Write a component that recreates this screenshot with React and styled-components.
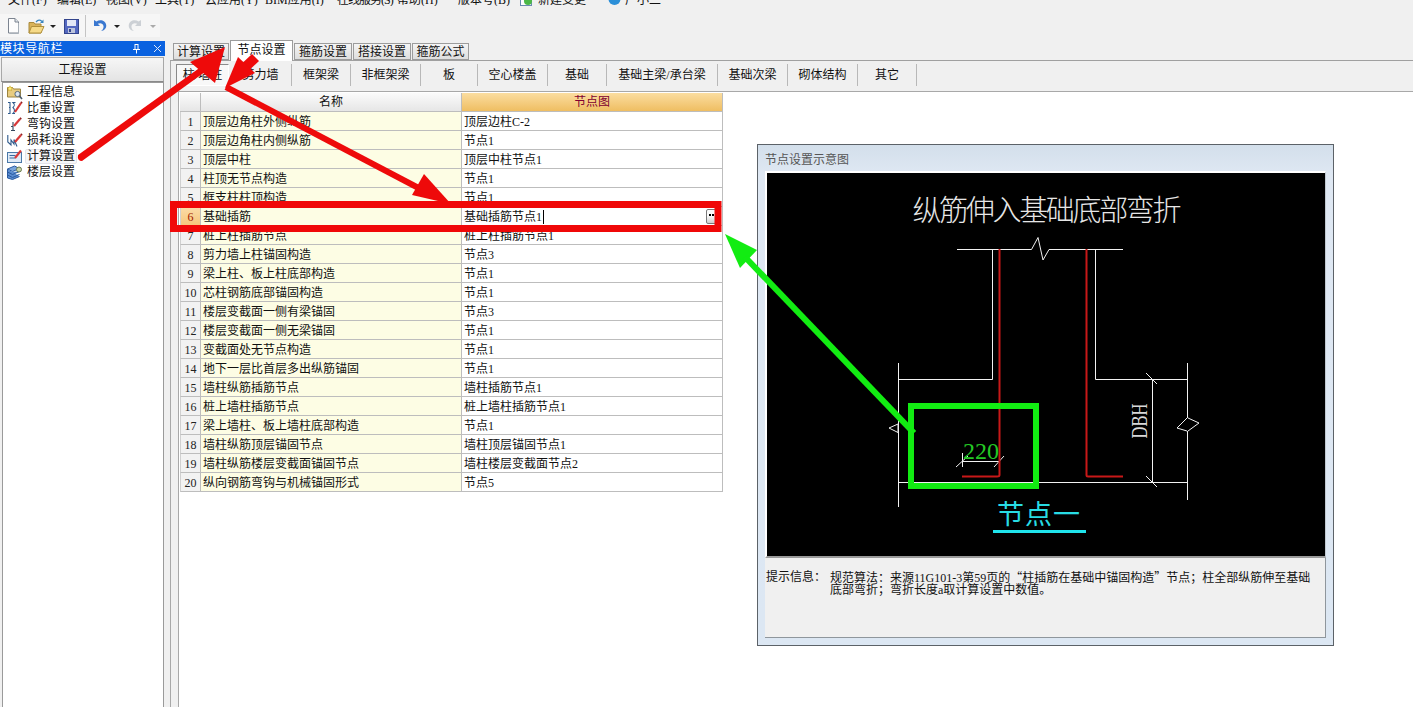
import React from "react";
import styled, { createGlobalStyle } from "styled-components";

const UI_FONT = `"Liberation Serif", "Noto Sans CJK SC", sans-serif`;

const Global = createGlobalStyle`
  html, body { margin: 0; padding: 0; background: #f0f0f0; }
  body { font: 12px/14px ${UI_FONT}; color: #111; overflow: hidden; }
  * { box-sizing: border-box; }
`;

const Page = styled.div`
  position: relative;
  width: 1413px;
  height: 707px;
  overflow: hidden;
  display: flex;
  flex-direction: column;
  background: #f0f0f0;
`;

/* Menu bar, scrolled almost out of the window */
const MenuBar = styled.div`
  height: 6px;
  margin-bottom: 8px;
  padding-left: 8px;
  display: flex;
  align-items: flex-end;
  overflow: hidden;
  flex: none;
`;
const MenuItem = styled.span`
  flex: none;
  width: ${(p) => p.$w}px;
  display: flex;
  align-items: center;
  gap: 4px;
  line-height: 12px;
  white-space: nowrap;
  letter-spacing: ${(p) => (p.$tight ? "-1px" : "normal")};
`;

const Toolbar = styled.div`
  height: 27px;
  flex: none;
  display: flex;
  align-items: flex-start;
`;
const ToolStrip = styled.div`
  width: 160px;
  height: 23px;
  padding: 1px 0 0 7px;
  background: #f6f6f6;
  display: flex;
  align-items: center;
`;
const ToolIcon = styled.span`
  flex: none;
  display: flex;
  width: ${(p) => p.$w}px;
  opacity: ${(p) => (p.$off ? 0.45 : 1)};
`;
const ToolSep = styled.span`
  flex: none;
  width: 1px;
  height: 22px;
  margin: 0 7px 0 6px;
  background: #c4c4c4;
`;
const Caret = styled.span`
  flex: none;
  width: 0;
  height: 0;
  margin: 0 ${(p) => p.$r ?? 6}px 0 ${(p) => p.$l ?? 5}px;
  border-left: 3px solid transparent;
  border-right: 3px solid transparent;
  border-top: 3px solid ${(p) => (p.$off ? "#aaa" : "#222")};
`;

const Main = styled.div`
  flex: 1;
  display: flex;
  min-height: 0;
`;

/* Left navigation dock */
const Dock = styled.aside`
  width: 165px;
  flex: none;
  display: flex;
  flex-direction: column;
`;
const DockTitle = styled.div`
  height: 15px;
  flex: none;
  padding: 0 3px 0 0;
  background: #0a62e0;
  color: #fff;
  display: flex;
  align-items: center;
  justify-content: space-between;
  font-size: 12px;
  letter-spacing: 0.6px;
`;
const DockGlyphs = styled.span`
  display: flex;
  gap: 12px;
  align-items: center;
`;
const DockButton = styled.div`
  height: 25px;
  flex: none;
  margin: 1px 1px 0;
  border: 1px solid #a8a8a8;
  border-bottom-color: #8a8a8a;
  background: linear-gradient(#f6f6f6, #e4e4e4);
  display: flex;
  align-items: center;
  justify-content: center;
`;
const Tree = styled.ul`
  flex: 1;
  list-style: none;
  margin: 0 1px 0 2px;
  padding: 1px 0 0 4px;
  background: #fff;
  border: 1px solid #9a9a9a;
  border-bottom: none;
`;
const TreeRow = styled.li`
  height: 16px;
  display: flex;
  align-items: center;
  gap: 4px;
`;
const TreeLabel = styled.span`
  padding: 0 1px;
  height: 15px;
  line-height: 15px;
  border-radius: 2px;
  border: 1px solid ${(p) => (p.$current ? "#e4e4ea" : "transparent")};
  background: ${(p) => (p.$current ? "#f6f6f8" : "transparent")};
  margin-left: -2px;
  display: flex;
  align-items: center;
`;

/* Settings workspace */
const Workspace = styled.section`
  flex: 1;
  min-width: 0;
  display: flex;
  flex-direction: column;
  margin-left: 5px;
  border-left: 1px solid #a8a8a8;
`;
const TabRow = styled.div`
  height: 20px;
  flex: none;
  margin-left: -1px;
  padding-left: 3px;
  display: flex;
  gap: 1px;
  align-items: flex-end;
  background: #f0f0f0;
  border-bottom: 1px solid #a0a0a0;
`;
const Tab = styled.div`
  width: ${(p) => p.$w}px;
  height: ${(p) => (p.$active ? 21 : 17)}px;
  margin-bottom: ${(p) => (p.$active ? -1 : 0)}px;
  padding-bottom: ${(p) => (p.$active ? 3 : 0)}px;
  position: relative;
  background: ${(p) => (p.$active ? "#fff" : "linear-gradient(#f4f4f4, #dedede)")};
  border: 1px solid #9c9c9c;
  border-bottom: ${(p) => (p.$active ? "none" : "1px solid #9c9c9c")};
  display: flex;
  align-items: center;
  justify-content: center;
`;
const SubBar = styled.div`
  height: 31px;
  flex: none;
  padding: 3px 0 0 5px;
  display: flex;
  align-items: flex-start;
  border-bottom: 1px solid #a8a8a8;
`;
const SubTab = styled.div`
  width: ${(p) => p.$w}px;
  height: 22px;
  flex: none;
  display: flex;
  align-items: center;
  justify-content: center;
  border-right: 1px solid #b8b8b8;
  ${(p) =>
    p.$pressed &&
    `
    border: 1px solid #fff;
    border-left-color: #8a8a8a;
    border-top-color: #8a8a8a;
    background: #f8f8f8;
    margin-right: 1px;
    width: ${p.$w - 1}px;
  `}
`;
const GridArea = styled.div`
  flex: 1;
  min-height: 0;
  margin-left: 7px;
  padding: 1px 0 0 1px;
  background: #fff;
  border-left: 1px solid #a8a8a8;
`;
const Grid = styled.div`
  width: 543px;
  display: grid;
  grid-template-columns: 21px 261px 261px;
  grid-auto-rows: 19px;
`;
const Cell = styled.div`
  display: flex;
  align-items: center;
  padding: 1px 0 0 2px;
  white-space: nowrap;
  border-right: 1px solid #bdbdbd;
  border-bottom: 1px solid #bdbdbd;
  background: #fff;
`;
const IndexCell = styled(Cell)`
  justify-content: center;
  padding: 1px 0 0;
  color: ${(p) => (p.$current ? "#a02000" : "#222")};
  background: ${(p) => (p.$current ? "linear-gradient(#fbdca8, #f6c77c)" : "#f2f2f2")};
  border-left: 1px solid #d0d0d0;
`;
const NameCell = styled(Cell)`
  background: #fdfde4;
`;
const ValueCell = styled(Cell)`
  justify-content: space-between;
  padding-right: 5px;
`;
const HeadCell = styled(Cell)`
  justify-content: center;
  padding: 0;
  background: linear-gradient(#fbfbfb, #e6e6e6);
`;
const HeadCellActive = styled(HeadCell)`
  color: #800030;
  background: linear-gradient(#fbdda0, #efbe62);
`;
const Caretted = styled.span`
  border-right: 1px solid #000;
  padding-right: 1px;
`;
const EllipsisButton = styled.span`
  width: 11px;
  height: 15px;
  border: 1px solid #7a7a7a;
  border-radius: 2px;
  background: linear-gradient(#fafafa 45%, #cfcfcf);
  display: flex;
  gap: 1px;
  justify-content: center;
  padding-top: 4px;
`;
const Dot = styled.i`
  width: 2px;
  height: 2px;
  background: #000;
`;

/* Floating preview window */
const PreviewWindow = styled.div`
  position: absolute;
  left: 757px;
  top: 144px;
  width: 577px;
  height: 502px;
  padding: 0 7px 7px;
  display: flex;
  flex-direction: column;
  background: linear-gradient(#d3dfeb, #dfe8f3 30px, #dce7f3);
  border: 1px solid #5c6268;
`;
const PreviewTitle = styled.div`
  height: 26px;
  flex: none;
  padding-top: 8px;
  line-height: 14px;
  color: #555;
`;
const Canvas = styled.div`
  height: 387px;
  flex: none;
  background: #000;
  border: solid #fff;
  border-width: 2px 0 0 2px;
  border-bottom: 2px solid #9a9a9a;
  border-right: 1px solid #c0c8d0;
  display: flex;
`;
const Hint = styled.div`
  flex: 1;
  padding: 13px 12px 0 0;
  background: #f0f0f0;
  border-bottom: 1px solid #8f969c;
  border-right: 1px solid #8f969c;
  display: flex;
  line-height: 12px;
  font-size: 12px;
`;
const HintLabel = styled.span`
  flex: none;
  width: 65px;
  padding-left: 1px;
`;
const HintBody = styled.span`
  flex: 1;
  min-width: 0;
`;
const WideQuote = styled.span`
  font-family: "Noto Sans CJK SC", sans-serif;
`;

const AnnotationLayer = styled.svg`
  position: absolute;
  left: 0;
  top: 0;
  width: 1413px;
  height: 707px;
  pointer-events: none;
`;

const NewIcon = () => (
  <svg width="13" height="16" viewBox="0 0 13 16">
    <path d="M1.500 .5h6.500l3.500 3.500v11h-10z" fill="#fdfdfd" stroke="#7c8490" />
    <path d="M8 .5v3.500h3.500" fill="#dfe4ea" stroke="#7c8490" />
    <path d="M11.500 5v10.500h-9" fill="none" stroke="#a8b0b8" />
  </svg>
);
const OpenIcon = () => (
  <svg width="17" height="15" viewBox="0 0 17 15">
    <path d="M1 3.500h5l1 1.500h6v9H1z" fill="#d9b35a" stroke="#a88a3c" />
    <path d="M3.500 7.500H16l-3 6.500H1z" fill="#f6da88" stroke="#b0903c" />
    <path d="M8 3c2-2.300 4-2.300 6-.5" fill="none" stroke="#3a86c0" strokeWidth="1.300" />
    <path d="M15.500 .5v3.500h-3.500z" fill="#3a86c0" />
  </svg>
);
const SaveIcon = () => (
  <svg width="15" height="15" viewBox="0 0 15 15">
    <rect x=".5" y=".5" width="14" height="14" fill="#5468c0" stroke="#33448c" />
    <rect x="3" y="1" width="9" height="6" fill="#e4e8f6" />
    <rect x="4" y="9" width="7" height="5" fill="#bcc4dc" />
    <rect x="5" y="10" width="2" height="3" fill="#33448c" />
  </svg>
);
const UndoIcon = () => (
  <svg width="14" height="14" viewBox="0 0 14 14">
    <path d="M1 1v6h6L4.800 4.800C7 3.400 10 4.200 10.500 7c.3 2-.8 3.800-2.500 5 3.400-.4 5.600-3 5.200-6C12.600 2 7.600-.4 3.400 2.600z" fill="#3a78d0" />
  </svg>
);
const RedoIcon = () => (
  <svg width="14" height="14" viewBox="0 0 14 14">
    <path d="M13 1v6H7l2.200-2.200C7 3.400 4 4.200 3.500 7c-.3 2 .8 3.800 2.500 5C2.600 11.600.4 9 .8 6 1.400 2 6.400-.4 10.600 2.600z" fill="#9aa4ae" />
  </svg>
);
const ChangeIcon = () => (
  <svg width="14" height="12" viewBox="0 0 14 12">
    <rect x=".5" y=".5" width="11" height="11" fill="#fff" stroke="#6a8ab0" />
    <circle cx="8" cy="7" r="4" fill="#4cb848" />
  </svg>
);
const HelperIcon = () => (
  <svg width="13" height="12" viewBox="0 0 13 12">
    <circle cx="6.500" cy="5" r="6" fill="#2b8fd8" />
  </svg>
);

const Pin = () => (
  <svg width="9" height="10" viewBox="0 0 9 10">
    <path d="M2.500 .5h4M3 1v4.500M6 1v4.500M1 5.500h7M4.500 5.500v4" stroke="#fff" fill="none" />
  </svg>
);
const Close = () => (
  <svg width="9" height="9" viewBox="0 0 9 9">
    <path d="M1 1l7 7M8 1L1 8" stroke="#dfe8f8" fill="none" />
  </svg>
);

const TreeIcons = {
  info: (
    <svg width="16" height="15" viewBox="0 0 16 15">
      <path d="M.5 2.500h5l1 1.500h7v8h-13z" fill="#e8cc80" stroke="#9c8440" />
      <path d="M3 .8l.8 1.600 1.800.2-1.300 1.200.3 1.800L3 4.900l-1.600.9.3-1.800L.4 2.600l1.800-.2z" fill="#fff27c" stroke="#c09a20" strokeWidth=".5" />
      <circle cx="10.500" cy="9" r="2.600" fill="#dbe6f0" stroke="#5a6a7a" />
      <path d="M12.500 11l2.500 3" stroke="#4a5a6a" strokeWidth="1.600" />
    </svg>
  ),
  weight: (
    <svg width="16" height="15" viewBox="0 0 16 15">
      <path d="M1 1.500h2v5H2h1v6H1M8.500 1.500H6c2 2 2 3 0 5 2 2 2 4 0 6h2" stroke="#2e5a8c" fill="none" strokeWidth="1.100" />
      <path d="M8 11l6-9" stroke="#d83a3a" strokeWidth="2.200" />
      <path d="M14 2l1-1" stroke="#902020" strokeWidth="2" />
    </svg>
  ),
  hook: (
    <svg width="16" height="15" viewBox="0 0 16 15">
      <path d="M6 5v8M4 13.500h4M4 9.500h2" stroke="#33475c" fill="none" strokeWidth="1.100" />
      <path d="M7 9l6-7" stroke="#d83a3a" strokeWidth="2.200" />
      <path d="M13 2l1.200-1" stroke="#902020" strokeWidth="2" />
    </svg>
  ),
  loss: (
    <svg width="16" height="15" viewBox="0 0 16 15">
      <path d="M.8 2v7l3.200 3V7l3 4V6.500l3 7" stroke="#2e5a8c" fill="none" strokeWidth="1.100" />
      <path d="M8 9l6-7" stroke="#d83a3a" strokeWidth="2.200" />
      <path d="M14 2l1-1" stroke="#902020" strokeWidth="2" />
    </svg>
  ),
  calc: (
    <svg width="16" height="15" viewBox="0 0 16 15">
      <rect x=".5" y="3.500" width="14" height="10" fill="#dfeaf6" stroke="#4a78a8" />
      <path d="M2.500 6.500h6M2.500 9h6" stroke="#3a6aa0" />
      <path d="M8 9l6-7.500" stroke="#d83a3a" strokeWidth="2.200" />
    </svg>
  ),
  floor: (
    <svg width="16" height="15" viewBox="0 0 16 15">
      <path d="M.5 4l7-3 5 2.500-7 3z" fill="#7aa6dc" stroke="#2a5aa0" />
      <path d="M.5 7l5 2.500 7-3M.5 10l5 2.500 7-3M.5 4v9l5 1.500 7-3" fill="#5a8cd0" stroke="#2a5aa0" />
      <circle cx="12" cy="4.500" r="2.500" fill="#c8d4a8" stroke="#6a7a50" />
    </svg>
  ),
};

const MENU = [
  ["文件(F)", 49], ["编辑(E)", 49], ["视图(V)", 49], ["工具(T)", 50], ["云应用(Y)", 60],
  ["BIM应用(I)", 72], ["在线服务(S)", 60, true], ["帮助(H)", 61], ["版本号(B)", 62],
];
const TREE = [
  ["info", "工程信息"], ["weight", "比重设置"], ["hook", "弯钩设置"],
  ["loss", "损耗设置"], ["calc", "计算设置"], ["floor", "楼层设置"],
];
const TABS = [["计算设置", 56], ["节点设置", 63], ["箍筋设置", 58], ["搭接设置", 58], ["箍筋公式", 57]];
const SUBTABS = [
  ["柱/墙柱", 54], ["剪力墙", 62], ["框架梁", 59], ["非框架梁", 70], ["板", 57], ["空心楼盖", 70],
  ["基础", 59], ["基础主梁/承台梁", 111], ["基础次梁", 70], ["砌体结构", 70], ["其它", 59],
];
const ROWS = [
  ["顶层边角柱外侧纵筋", "顶层边柱C-2"],
  ["顶层边角柱内侧纵筋", "节点1"],
  ["顶层中柱", "顶层中柱节点1"],
  ["柱顶无节点构造", "节点1"],
  ["框支柱柱顶构造", "节点1"],
  ["基础插筋", "基础插筋节点1"],
  ["桩上柱插筋节点", "桩上柱插筋节点1"],
  ["剪力墙上柱锚固构造", "节点3"],
  ["梁上柱、板上柱底部构造", "节点1"],
  ["芯柱钢筋底部锚固构造", "节点1"],
  ["楼层变截面一侧有梁锚固", "节点3"],
  ["楼层变截面一侧无梁锚固", "节点1"],
  ["变截面处无节点构造", "节点1"],
  ["地下一层比首层多出纵筋锚固", "节点1"],
  ["墙柱纵筋插筋节点", "墙柱插筋节点1"],
  ["桩上墙柱插筋节点", "桩上墙柱插筋节点1"],
  ["梁上墙柱、板上墙柱底部构造", "节点1"],
  ["墙柱纵筋顶层锚固节点", "墙柱顶层锚固节点1"],
  ["墙柱纵筋楼层变截面锚固节点", "墙柱楼层变截面节点2"],
  ["纵向钢筋弯钩与机械锚固形式", "节点5"],
];

/* Detail drawing of the footing anchorage, in window coordinates */
const NodeDrawing = () => (
  <svg width="556" height="384" viewBox="768 173 556 384" style={{ display: "block" }}>
    <text x="1048" y="221" textAnchor="middle" fontSize="29" fill="#e6e6e6" textLength="269" fontFamily={`"Noto Sans CJK SC", sans-serif`} fontWeight="300">
      纵筋伸入基础底部弯折
    </text>
    <g stroke="#f2f2f2" strokeWidth="1" fill="none">
      <path d="M958 249.500H1032.500L1039 237.500L1044 260L1050 249.500H1124" />
      <path d="M993.500 249V379.500H899.500M899.500 363V507M890 428L899 424V432.500Z" />
      <path d="M1096.500 249V379.500H1188.500M1188.500 363V418M1188.500 431V500" />
      <path d="M899 482.500H1188.500" />
      <path d="M1153.500 379V482M1147 373L1158 384M1147 476L1158 487" />
      <path d="M1188 418L1178 428L1188 431M1189 418L1200 423L1189 431" />
      <path d="M963.500 453V467M957 467L969 456M963 461.500H1001M995 467L1005 456" />
    </g>
    <path d="M1000.500 249V475Q1000.500 476.500 998 476.500H963" fill="none" stroke="#c81818" strokeWidth="2" />
    <path d="M1087.500 249V475Q1087.500 476.500 1089 476.500H1124" fill="none" stroke="#c81818" strokeWidth="2" />
    <text
      x="1149"
      y="422"
      textAnchor="middle"
      fontSize="23"
      fill="#d8d8d8"
      textLength="35"
      lengthAdjust="spacingAndGlyphs"
      transform="rotate(-90 1148 422)"
      fontFamily={`"Liberation Serif", serif`}
    >
      DBH
    </text>
    <text x="982" y="459" textAnchor="middle" fontSize="24" fill="#24c824" fontFamily={`"Liberation Serif", serif`}>
      220
    </text>
    <text x="1040" y="524" textAnchor="middle" fontSize="27" fill="#28dce4" letterSpacing="1" fontFamily={`"Noto Sans CJK SC", sans-serif`}>
      节点一
    </text>
    <rect x="994" y="530" width="93" height="3" fill="#1fe4ec" />
  </svg>
);

export default function App() {
  return (
    <Page>
      <Global />
      <MenuBar>
        {MENU.map(([label, w, tight]) => (
          <MenuItem key={label} $w={w} $tight={tight}>{label}</MenuItem>
        ))}
        <MenuItem $w={88}><ChangeIcon />新建变更</MenuItem>
        <MenuItem $w={60}><HelperIcon />广小二</MenuItem>
      </MenuBar>
      <Toolbar>
        <ToolStrip>
          <ToolIcon $w={21}><NewIcon /></ToolIcon>
          <ToolIcon $w={17}><OpenIcon /></ToolIcon>
          <Caret $l={5} $r={8} />
          <ToolIcon $w={15}><SaveIcon /></ToolIcon>
          <ToolSep />
          <ToolIcon $w={14}><UndoIcon /></ToolIcon>
          <Caret $l={7} $r={8} />
          <ToolIcon $w={14} $off><RedoIcon /></ToolIcon>
          <Caret $off $l={8} />
        </ToolStrip>
      </Toolbar>
      <Main>
        <Dock>
          <DockTitle>
            模块导航栏
            <DockGlyphs><Pin /><Close /></DockGlyphs>
          </DockTitle>
          <DockButton>工程设置</DockButton>
          <Tree>
            {TREE.map(([icon, label]) => (
              <TreeRow key={label}>
                {TreeIcons[icon]}
                <TreeLabel $current={label === "计算设置"}>{label}</TreeLabel>
              </TreeRow>
            ))}
          </Tree>
        </Dock>
        <Workspace>
          <TabRow>
            {TABS.map(([label, w]) => (
              <Tab key={label} $w={w} $active={label === "节点设置"}>{label}</Tab>
            ))}
          </TabRow>
          <SubBar>
            {SUBTABS.map(([label, w], i) => (
              <SubTab key={label} $w={w} $pressed={i === 0}>{label}</SubTab>
            ))}
          </SubBar>
          <GridArea>
            <Grid>
              <HeadCell />
              <HeadCell>名称</HeadCell>
              <HeadCellActive>节点图</HeadCellActive>
              {ROWS.map(([name, value], i) => (
                <React.Fragment key={name}>
                  <IndexCell $current={i === 5}>{i + 1}</IndexCell>
                  <NameCell>{name}</NameCell>
                  {i === 5 ? (
                    <ValueCell>
                      <Caretted>{value}</Caretted>
                      <EllipsisButton><Dot /><Dot /></EllipsisButton>
                    </ValueCell>
                  ) : (
                    <ValueCell>{value}</ValueCell>
                  )}
                </React.Fragment>
              ))}
            </Grid>
          </GridArea>
        </Workspace>
      </Main>

      <PreviewWindow>
        <PreviewTitle>节点设置示意图</PreviewTitle>
        <Canvas><NodeDrawing /></Canvas>
        <Hint>
          <HintLabel>提示信息：</HintLabel>
          <HintBody>
            规范算法：来源11G101-3第59页的<WideQuote>“</WideQuote>柱插筋在基础中锚固构造<WideQuote>”</WideQuote>节点；柱全部纵筋伸至基础底部弯折；弯折长度a取计算设置中数值。
          </HintBody>
        </Hint>
      </PreviewWindow>

      {/* Hand-drawn callouts over the window */}
      <AnnotationLayer viewBox="0 0 1413 707">
        <g fill="#ee0a0a">
          <path d="M78 155L205 64L209 69L82 161Q77 161 78 155Z" />
          <path d="M225 47L190 62L215 83Z" />
          <path d="M252 54L259 61L243 76L236 69Z" />
          <path d="M225 88L238 57L255 73Z" />
          <path d="M227.400 84.300L431.400 191.300L428.600 196.700L224.600 89.700Z" />
          <path d="M451 204L412 195L424 174Z" />
        </g>
        <rect x="173.500" y="204.500" width="544.500" height="24" fill="none" stroke="#f00808" strokeWidth="7" />
        <g fill="#12ec12">
          <path d="M725 234L757 250L740 268Z" />
          <path d="M747.200 254.900L916.200 430.900L911.800 435.100L742.800 259.100Z" />
        </g>
        <rect x="911" y="406" width="125" height="80" fill="none" stroke="#12ec12" strokeWidth="6" />
      </AnnotationLayer>
    </Page>
  );
}
